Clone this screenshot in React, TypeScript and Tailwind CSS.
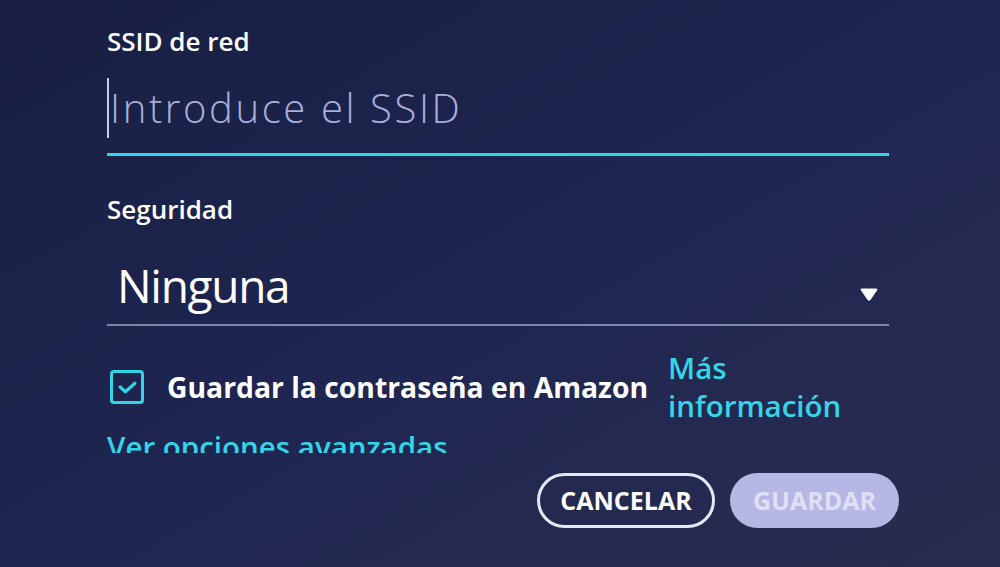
import React from 'react'

// Wi-Fi network form: SSID field, security picker, save toggle and actions
function CheckIcon() {
  return (
    <svg className="w-[19px] h-[13px]" viewBox="0 0 18 12" fill="none">
      <path
        d="M2 5.5 L7 10 L16 2"
        stroke="#2fd6e6"
        strokeWidth={3}
        strokeLinecap="round"
        strokeLinejoin="round"
      />
    </svg>
  )
}

function Caret() {
  return (
    <svg className="w-[20px] h-[16px]" viewBox="0 0 20 16">
      <path
        d="M3 2.5 H17 Q19 2.5 18 4.5 L11.4 14 Q10 15.6 8.6 14 L2 4.5 Q1 2.5 3 2.5 Z"
        fill="#ffffff"
      />
    </svg>
  )
}

export default function App() {
  return (
    <div className="w-[1000px] h-[567px] overflow-hidden bg-gradient-to-br from-[#181f42] via-[#1e2651] to-[#2a2c4e] font-['Open_Sans',sans-serif] text-white">
      <div className="pl-[107px] pr-[101px] pt-[24px]">
        {/* scrolling form area, clipped at the bottom */}
        <div className="h-[429px] overflow-hidden pr-[10px]">
          <div className="text-[26px] font-semibold leading-[34px]">
            SSID de red
          </div>

          <div className="mt-[20px] flex items-center h-[60px] box-content pb-[15px] border-b-[3px] border-[#2fd6e6]">
            <span className="w-[2px] h-[60px] bg-[#c7cbee]" />
            <span className="ml-[1px] text-[40px] font-light leading-[54px] text-[#a9aedb] tracking-[2.6px]">
              Introduce el SSID
            </span>
          </div>

          <div className="mt-[36px] text-[26px] font-semibold leading-[34px]">
            Seguridad
          </div>

          <div className="mt-[31px] flex items-start justify-between h-[56px] box-content pb-[11px] border-b-2 border-[#7f86ad] pl-[10px] pr-[10px]">
            <span className="text-[46px] font-medium leading-[56px] tracking-[-1.3px]">
              Ninguna
            </span>
            <span className="mt-[29px]">
              <Caret />
            </span>
          </div>

          <div className="mt-[23px] flex items-center">
            <div className="ml-[3px] w-[34px] h-[34px] rounded-[4px] border-[3px] border-[#2fd6e6] flex items-center justify-center">
              <CheckIcon />
            </div>
            <span className="ml-[23px] text-[28.3px] font-bold leading-[36px]">
              Guardar la contraseña en Amazon
            </span>
            <a className="ml-[20px] text-[29.5px] font-semibold leading-[38px] text-[#33d6e8]">
              Más
              <br />
              información
            </a>
          </div>

          <a className="block mt-[2px] text-[29.5px] font-semibold leading-[40px] text-[#33d6e8]">
            Ver opciones avanzadas
          </a>
        </div>

        <div className="mt-[20px] flex justify-end gap-[15px]">
          <button className="w-[178px] h-[55px] rounded-full border-[3px] border-[#e6e7f5] text-[25px] font-bold text-white">
            CANCELAR
          </button>
          <button className="w-[169px] h-[55px] rounded-full bg-[#b6b7e4] text-[25px] font-bold text-[#dfe0f4]">
            GUARDAR
          </button>
        </div>
      </div>
    </div>
  )
}
